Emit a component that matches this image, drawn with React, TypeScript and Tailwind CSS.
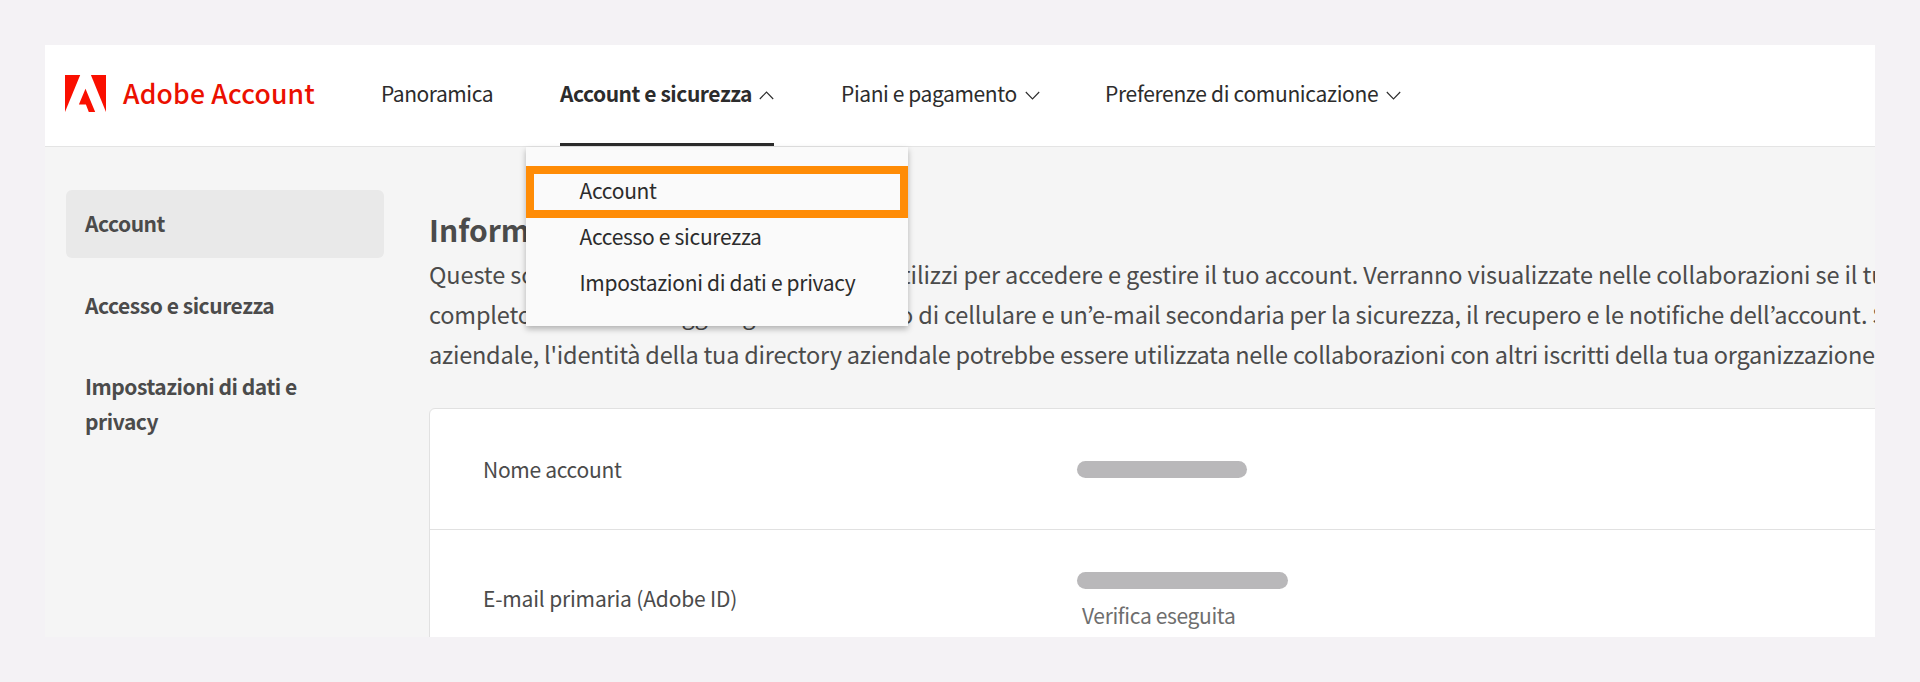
import React, { useState } from 'react';

const menuItems = ['Account', 'Accesso e sicurezza', 'Impostazioni di dati e privacy'];

const Chevron = ({ up = false }: { up?: boolean }) => (
  <svg
    className={`w-[15px] h-[9px] mt-[5px] shrink-0 ${up ? '' : 'rotate-180'}`}
    fill="none"
    stroke="#2c2c2c"
    strokeWidth={1.1}
    viewBox="0 0 15 9"
  >
    <path d="M0.8 8L7.5 1L14.2 8" />
  </svg>
);

const Header = () => {
  const [isMenuOpen, setIsMenuOpen] = useState(true);

  return (
    <header className="relative z-10 h-[102px] shrink-0 flex items-stretch pl-5 bg-white border-b border-[#e4e4e4] text-[21px] leading-[30px] tracking-[-0.32px] text-[#2c2c2c] whitespace-nowrap">
      {/* Brand */}
      <div className="w-[316px] shrink-0 flex items-center gap-[17px] pb-[5px]">
        <svg className="w-[41px] h-[37px] shrink-0" viewBox="0 0 41 37" fill="#fa0f00">
          <path d="M0 0H15.2L0 37Z" />
          <path d="M25.9 0H41V37Z" />
          <path d="M20.5 13.7L30.2 37H23.8L20.9 29.6H13.9Z" />
        </svg>
        <span className="text-[26.5px] font-medium tracking-[0.2px] text-[#eb1000]">Adobe Account</span>
      </div>

      <nav className="flex items-stretch">
        <a className="w-[179px] flex items-center pb-[5px] tracking-[-0.45px]">Panoramica</a>

        <div className="relative w-[214px] flex items-stretch">
          <button
            onClick={() => setIsMenuOpen(!isMenuOpen)}
            className="w-full flex items-center justify-between pb-[2px] border-b-[3px] border-[#2c2c2c] font-bold tracking-[-0.45px]"
          >
            Account e sicurezza
            <Chevron up={isMenuOpen} />
          </button>

          {isMenuOpen && (
            <div className="absolute left-[-34px] top-[102px] w-[382px] h-[179px] pt-5 bg-[#fafafa] shadow-[0_3px_6px_rgba(0,0,0,0.28)]">
              {menuItems.map((item) => (
                <a key={item} className="block pl-[53.5px] leading-[46px]">{item}</a>
              ))}
              {/* Highlight frame around the first entry */}
              <div className="absolute inset-x-0 top-[19px] h-[52px] border-8 border-[#ff8c06]" />
            </div>
          )}
        </div>

        <button className="w-[199px] ml-[67px] flex items-center justify-between pb-[5px] tracking-[-0.4px]">
          Piani e pagamento
          <Chevron />
        </button>
        <button className="w-[296px] ml-[65px] flex items-center justify-between pb-[5px]">
          Preferenze di comunicazione
          <Chevron />
        </button>
      </nav>
    </header>
  );
};

const Sidebar = () => (
  <aside className="w-[318px] shrink-0 pt-[43px] flex flex-col gap-[13.5px]">
    {menuItems.map((item, i) => (
      <a
        key={item}
        className={`pt-[16px] pb-[17px] pl-[19px] pr-16 rounded-md text-[21px] leading-[35px] font-bold tracking-[-0.45px] text-[#4b4b4b] ${
          i === 0 ? 'bg-[#e9e9e9]' : ''
        }`}
      >
        {item}
      </a>
    ))}
  </aside>
);

const AccountInfo = () => (
  <main className="ml-[45px] pt-[62px] flex-1 min-w-0 text-[#4b4b4b]">
    <h1 className="text-[30px] leading-10 font-bold whitespace-nowrap">Informazioni account</h1>
    <div className="mt-[5px] text-[23.5px] leading-10 tracking-[-0.22px] whitespace-nowrap">
      <p className="tracking-[-0.1px]">Queste sono le informazioni personali che utilizzi per accedere e gestire il tuo account. Verranno visualizzate nelle collaborazioni se il tuo profilo è</p>
      <p className="tracking-[-0.17px]">completo. Puoi anche aggiungere un numero di cellulare e un’e-mail secondaria per la sicurezza, il recupero e le notifiche dell’account. Se hai un profilo</p>
      <p>aziendale, l'identità della tua directory aziendale potrebbe essere utilizzata nelle collaborazioni con altri iscritti della tua organizzazione.</p>
    </div>

    <section className="mt-[34px] w-[1500px] bg-white border border-[#e1e1e1] rounded-md text-[21px] leading-[30px]">
      <div className="h-[121px] flex pl-[53px] border-b border-[#e1e1e1]">
        <div className="w-[594px] pt-[45px] tracking-[-0.3px]">Nome account</div>
        <div className="pt-[52px]">
          <div className="w-[170px] h-[17px] rounded-full bg-[#b9b8ba]" />
        </div>
      </div>
      <div className="h-[150px] flex pl-[53px]">
        <div className="w-[594px] pt-[53px] tracking-[-0.17px]">E-mail primaria (Adobe ID)</div>
        <div className="pt-[42px]">
          <div className="w-[211px] h-[17px] rounded-full bg-[#b9b8ba]" />
          <p className="mt-[11px] pl-[5px] tracking-[-0.35px] text-[#6e6e6e]">Verifica eseguita</p>
        </div>
      </div>
    </section>
  </main>
);

export default function App() {
  return (
    <div className="h-[682px] w-[1920px] p-[45px] bg-[#f4f2f5] font-['Noto_Sans_CJK_JP','Noto_Sans',sans-serif] overflow-hidden">
      <div className="h-[592px] w-[1830px] flex flex-col overflow-hidden bg-[#f5f5f5]">
        <Header />
        <div className="flex pl-[21px]">
          <Sidebar />
          <AccountInfo />
        </div>
      </div>
    </div>
  );
}
